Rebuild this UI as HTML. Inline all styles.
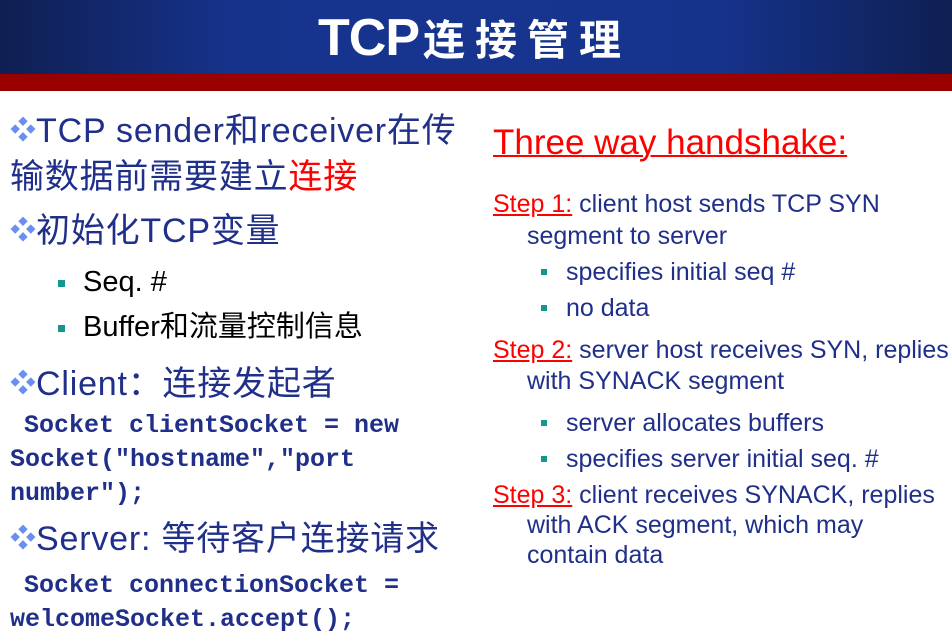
<!DOCTYPE html>
<html><head><meta charset="utf-8"><style>
body{margin:0;width:952px;height:638px;overflow:hidden;background:#fff;position:relative;font-family:"Liberation Sans","Noto Sans CJK SC",sans-serif}
.hd{position:absolute;left:0;top:0;width:952px;height:74px;background:linear-gradient(90deg,#0f1f52 0%,#16338c 25%,#17358f 50%,#16338c 75%,#0f1f52 100%)}
.rb{position:absolute;left:0;top:74px;width:952px;height:17px;background:#990000}
.t{position:absolute;white-space:nowrap;line-height:1}
.b{color:#1f2f8a;letter-spacing:0.8px}
.dia{color:#6a8ff0;font-size:26px;vertical-align:3px;letter-spacing:0}
.sq{position:absolute;width:7px;height:7px;background:#13978f}
.m{font-family:"Liberation Mono",monospace;font-weight:bold;font-size:25px;color:#1f2f8a}
.r{color:#ff0000}
.s{font-size:25px;color:#1f2f8a}
</style></head><body>
<div class="hd"></div><div class="rb"></div>
<div class="t" style="left:318px;top:12px;font-size:52px;font-weight:bold;color:#fff;letter-spacing:-1px">TCP<span style="font-size:42px;letter-spacing:10px;margin-left:4px">连接管理</span></div>

<div class="t b" style="left:10px;top:114px;font-size:34px"><span class="dia">❖</span>TCP sender和receiver在传</div>
<div class="t b" style="left:10px;top:160px;font-size:34px">输数据前需要建立<span class="r">连接</span></div>
<div class="t b" style="left:10px;top:214px;font-size:34px"><span class="dia">❖</span>初始化TCP变量</div>
<div class="sq" style="left:58px;top:280px"></div>
<div class="t" style="left:83px;top:268px;font-size:29px;color:#000">Seq. #</div>
<div class="sq" style="left:58px;top:325px"></div>
<div class="t" style="left:83px;top:313px;font-size:29px;color:#000">Buffer和流量控制信息</div>
<div class="t b" style="left:10px;top:364px;font-size:34px"><span class="dia">❖</span>Client<span style="font-family:'Noto Sans CJK SC',sans-serif">：连接发起者</span></div>
<div class="t m" style="left:24px;top:413px">Socket clientSocket = new</div>
<div class="t m" style="left:10px;top:447px">Socket("hostname","port</div>
<div class="t m" style="left:10px;top:481px">number");</div>
<div class="t b" style="left:10px;top:522px;font-size:34px"><span class="dia">❖</span>Server: 等待客户连接请求</div>
<div class="t m" style="left:24px;top:573px">Socket connectionSocket =</div>
<div class="t m" style="left:10px;top:607px">welcomeSocket.accept();</div>

<div class="t r" style="left:493px;top:125px;font-size:35px;text-decoration:underline;text-decoration-thickness:2px">Three way handshake:</div>
<div class="t s" style="left:493px;top:192px"><span class="r" style="text-decoration:underline">Step 1:</span> client host sends TCP SYN</div>
<div class="t s" style="left:527px;top:224px">segment to server</div>
<div class="sq" style="left:541px;top:269px;width:6px;height:6px"></div>
<div class="t s" style="left:566px;top:260px">specifies initial seq #</div>
<div class="sq" style="left:541px;top:305px;width:6px;height:6px"></div>
<div class="t s" style="left:566px;top:296px">no data</div>
<div class="t s" style="left:493px;top:338px"><span class="r" style="text-decoration:underline">Step 2:</span> server host receives SYN, replies</div>
<div class="t s" style="left:527px;top:369px">with SYNACK segment</div>
<div class="sq" style="left:541px;top:420px;width:6px;height:6px"></div>
<div class="t s" style="left:566px;top:411px">server allocates buffers</div>
<div class="sq" style="left:541px;top:456px;width:6px;height:6px"></div>
<div class="t s" style="left:566px;top:447px">specifies server initial seq. #</div>
<div class="t s" style="left:493px;top:483px"><span class="r" style="text-decoration:underline">Step 3:</span> client receives SYNACK, replies</div>
<div class="t s" style="left:527px;top:513px">with ACK segment, which may</div>
<div class="t s" style="left:527px;top:543px">contain data</div>
</body></html>
